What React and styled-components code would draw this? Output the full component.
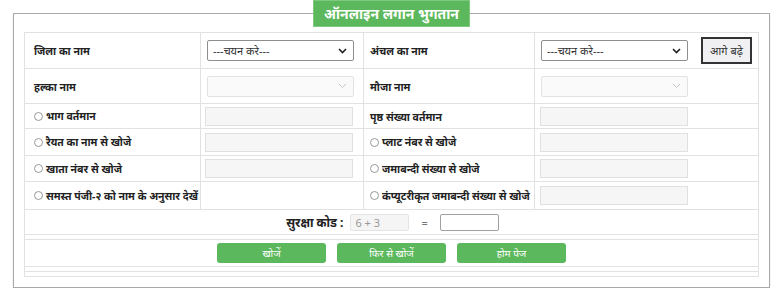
import React from 'react';
import styled, { createGlobalStyle } from 'styled-components';

const GlobalStyle = createGlobalStyle`
  body {
    margin: 0;
    background: #fff;
    font-family: "Noto Sans", "Noto Sans Devanagari", "Lohit Devanagari", sans-serif;
  }
`;

const Frame = styled.fieldset`
  box-sizing: border-box;
  width: 757px;
  margin: 0 0 0 13px;
  padding: 5px 10px 10px 10px;
  border: 1px solid #a8a8a8;
  box-shadow: 0 1px 1px rgba(0, 0, 0, 0.2);
`;

const Legend = styled.legend`
  box-sizing: border-box;
  margin: 0 auto;
  width: 157px;
  height: 27px;
  padding: 0;
  background: #5cb85c;
  border: 1px solid #7fc97f;
  color: #fff;
  font-weight: bold;
  font-size: 14px;
  line-height: 25px;
  text-align: center;
`;

const Table = styled.table`
  width: 734px;
  border-collapse: collapse;
  border: 1px solid #e2e2e2;
  table-layout: fixed;
  font-size: 11px;
  color: #222;
`;

const Row = styled.tr`
  height: ${(p) => p.$h}px;
`;

const Cell = styled.td`
  border: 1px solid #e2e2e2;
  padding: 0 6px 0 ${(p) => p.$pl ?? 6}px;
  vertical-align: middle;
  text-align: ${(p) => (p.$center ? 'center' : 'left')};
`;

const Label = styled.span`
  display: inline-flex;
  align-items: center;
  font-weight: bold;
  font-size: 10.5px;
  color: #222;
  white-space: nowrap;
`;

const Radio = styled.span`
  display: inline-block;
  box-sizing: border-box;
  width: 9px;
  height: 9px;
  margin-right: 3px;
  border: 1px solid #999;
  border-radius: 50%;
  background: #fff;
`;

const SelectBox = styled.div`
  box-sizing: border-box;
  display: inline-flex;
  align-items: center;
  justify-content: space-between;
  width: 147px;
  height: 21px;
  padding: 0 6px 0 5px;
  border: 1px solid ${(p) => (p.$disabled ? '#e2e2e2' : '#8e8e8e')};
  border-radius: 2px;
  background: ${(p) => (p.$disabled ? '#fafafa' : '#fff')};
  font-size: 11px;
  color: #333;
  vertical-align: middle;
`;

const TextBox = styled.div`
  box-sizing: border-box;
  width: 148px;
  height: 19px;
  border: 1px solid #e0e0e0;
  background: #f6f6f6;
`;

const NextButton = styled.div`
  box-sizing: border-box;
  display: inline-flex;
  align-items: center;
  justify-content: center;
  width: 51px;
  height: 27px;
  margin-left: 13px;
  border: 2px solid #333;
  background: #f0f0f3;
  font-size: 11px;
  color: #333;
  vertical-align: middle;
`;

const CodeLine = styled.div`
  display: flex;
  align-items: center;
  justify-content: center;
  padding-left: 2px;
`;

const CodeLabel = styled.span`
  font-weight: bold;
  font-size: 12px;
  color: #222;
  margin-right: 7px;
`;

const CodeBox = styled.div`
  box-sizing: border-box;
  width: ${(p) => p.$w}px;
  height: 17px;
  padding-left: 4px;
  border: 1px solid ${(p) => (p.$light ? '#e4e4e4' : '#a0a0a0')};
  border-radius: 2px;
  background: ${(p) => (p.$light ? '#f5f5f5' : '#fff')};
  font-size: 11px;
  line-height: 15px;
  color: #999;
  text-align: left;
`;

const Equals = styled.span`
  margin: 0 12px;
  color: #777;
  font-size: 11px;
`;

const ButtonLine = styled.div`
  display: flex;
  justify-content: center;
  gap: 11px;
`;

const GreenButton = styled.div`
  width: 109px;
  height: 20px;
  border-radius: 3px;
  background: #5cb85c;
  color: #fff;
  font-size: 10px;
  line-height: 20px;
  text-align: center;
`;

const Arrow = ({ light }) => (
  <svg width="9" height="6" viewBox="0 0 9 6">
    <path
      d="M1 1 L4.5 4.5 L8 1"
      fill="none"
      stroke={light ? '#c4c4c4' : '#222'}
      strokeWidth={light ? 1 : 1.6}
    />
  </svg>
);

const Select = ({ disabled }) => (
  <SelectBox $disabled={disabled}>
    <span>{disabled ? '' : '---चयन करे---'}</span>
    <Arrow light={disabled} />
  </SelectBox>
);

const searchRows = [
  ['भाग वर्तमान', 'पृष्ठ संख्या वर्तमान', false, true, 25],
  ['रैयत का नाम से खोजे', 'प्लाट नंबर से खोजे', true, true, 27],
  ['खाता नंबर से खोजे', 'जमाबन्दी संख्या से खोजे', true, true, 26],
  ['समस्त पंजी-२ को नाम के अनुसार देखें', 'कंप्यूटरीकृत जमाबन्दी संख्या से खोजे', true, false, 28],
];

export default function App() {
  return (
    <>
      <GlobalStyle />
      <Frame>
        <Legend>ऑनलाइन लगान भुगतान</Legend>
        <Table>
          <colgroup>
            <col style={{ width: 176 }} />
            <col style={{ width: 163 }} />
            <col style={{ width: 171 }} />
            <col style={{ width: 224 }} />
          </colgroup>
          <tbody>
            <Row $h={36}>
              <Cell $pl={9}><Label>जिला का नाम</Label></Cell>
              <Cell><Select /></Cell>
              <Cell><Label>अंचल का नाम</Label></Cell>
              <Cell>
                <Select />
                <NextButton>आगे बढ़े</NextButton>
              </Cell>
            </Row>
            <Row $h={35}>
              <Cell $pl={9}><Label>हल्का नाम</Label></Cell>
              <Cell><Select disabled /></Cell>
              <Cell><Label>मौजा नाम</Label></Cell>
              <Cell><Select disabled /></Cell>
            </Row>
            {searchRows.map(([a, b, bRadio, aInput, h], i) => (
              <Row key={i} $h={h}>
                <Cell $pl={9}><Label><Radio />{a}</Label></Cell>
                <Cell $pl={4}>{aInput && <TextBox />}</Cell>
                <Cell>
                  <Label>{bRadio && <Radio />}{b}</Label>
                </Cell>
                <Cell $pl={5}><TextBox /></Cell>
              </Row>
            ))}
            <Row $h={25}>
              <Cell colSpan={4} $center>
                <CodeLine>
                  <CodeLabel>सुरक्षा कोड :</CodeLabel>
                  <CodeBox $w={59} $light>6 + 3</CodeBox>
                  <Equals>=</Equals>
                  <CodeBox $w={59} />
                </CodeLine>
              </Cell>
            </Row>
            <Row $h={5}>
              <Cell colSpan={4} />
            </Row>
            <Row $h={27}>
              <Cell colSpan={4}>
                <ButtonLine>
                  <GreenButton>खोजें</GreenButton>
                  <GreenButton>फिर से खोजें</GreenButton>
                  <GreenButton>होम पेज</GreenButton>
                </ButtonLine>
              </Cell>
            </Row>
            <Row $h={5}>
              <Cell colSpan={4} />
            </Row>
            <Row $h={5}>
              <Cell colSpan={4} />
            </Row>
          </tbody>
        </Table>
      </Frame>
    </>
  );
}
